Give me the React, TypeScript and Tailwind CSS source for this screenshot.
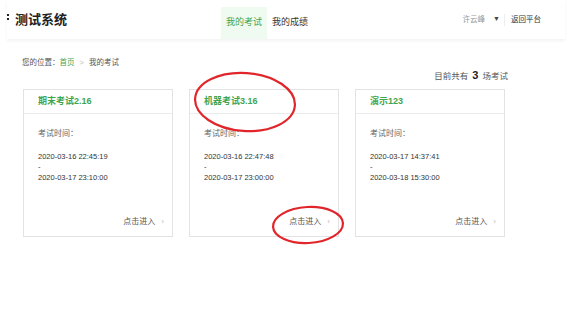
import React from 'react';

const font = { fontFamily: '"Liberation Sans", "Noto Sans CJK SC", sans-serif' };

const exams = [
  { title: '期末考试2.16', start: '2020-03-16 22:45:19', end: '2020-03-17 23:10:00' },
  { title: '机器考试3.16', start: '2020-03-16 22:47:48', end: '2020-03-17 23:00:00' },
  { title: '演示123', start: '2020-03-17 14:37:41', end: '2020-03-18 15:30:00' },
];

function ExamCard({ title, start, end }: { title: string; start: string; end: string }) {
  return (
    <div className="flex h-[148px] w-[150px] flex-col border border-[#e3e3e3] bg-white">
      <div className="flex h-[24px] items-center border-b border-[#ececec] pl-[14px] text-[9px] font-bold text-[#3fa54f]">
        {title}
      </div>
      <div className="px-[14px] pt-[14px] text-[8px] text-[#666]">考试时间：</div>
      <div className="px-[14px] pt-[12px] text-[7.5px] leading-[10.5px] text-[#333]">
        <div>{start}</div>
        <div>-</div>
        <div>{end}</div>
      </div>
      <div className="mt-auto flex items-center justify-end gap-[6px] pb-[8px] pr-[8px] text-[8px] text-[#555]">
        <span>点击进入</span>
        <span className="text-[8px] text-[#bbb]">›</span>
      </div>
    </div>
  );
}

export default function App() {
  return (
    <div className="relative h-[311px] w-[572px] overflow-hidden bg-white" style={font}>
      <div className="mx-[7px] flex h-[39px] items-center bg-white shadow-[0_2px_3px_rgba(0,0,0,0.05)]">
        <div className="flex items-center">
          <div className="mb-[6px] flex flex-col gap-[2px]">
            <span className="block h-[2px] w-[2px] bg-[#222]" />
            <span className="block h-[2px] w-[2px] bg-[#222]" />
          </div>
          <span className="ml-[6px] text-[13px] font-bold text-[#222]">测试系统</span>
        </div>
        <nav className="ml-[154px] flex h-full items-stretch pt-[7px] text-[9px]">
          <div className="flex items-center bg-[#effaf1] px-[5px] text-[#3fa54f]">我的考试</div>
          <div className="flex items-center px-[5px] text-[#333]">我的成绩</div>
        </nav>
        <div className="ml-auto mr-[24px] flex items-center text-[7.5px]">
          <span className="text-[#999]">许云峰</span>
          <span className="ml-[8px] text-[7px] text-[#444]">▼</span>
          <span className="ml-[4px] h-[12px] w-px bg-[#eee]" />
          <span className="ml-[6px] text-[#333]">返回平台</span>
        </div>
      </div>

      <div className="w-[508px] pl-[22px] pt-[18px]">
        <div className="text-[7.5px] text-[#555]">
          您的位置：<span className="text-[#3fa54f]">首页</span>
          <span className="mx-[5px] text-[#bbb]">&gt;</span>我的考试
        </div>
        <div className="-mt-[1px] flex items-baseline justify-end text-[8.5px] text-[#555]">
          目前共有<span className="mx-[4px] text-[11px] font-bold text-[#222]">3</span>场考试
        </div>
        <div className="mt-[5px] flex gap-[16px] pl-[1px]">
          {exams.map((e) => (
            <ExamCard key={e.title} {...e} />
          ))}
        </div>
      </div>

      <svg className="pointer-events-none absolute left-0 top-0" width="572" height="311">
        <ellipse cx="245" cy="102" rx="50" ry="29" fill="none" stroke="#e0262b" strokeWidth="2.2" transform="rotate(4 245 102)" />
        <ellipse cx="308" cy="225" rx="35" ry="18" fill="none" stroke="#e0262b" strokeWidth="2.2" transform="rotate(-3 308 225)" />
      </svg>
    </div>
  );
}
